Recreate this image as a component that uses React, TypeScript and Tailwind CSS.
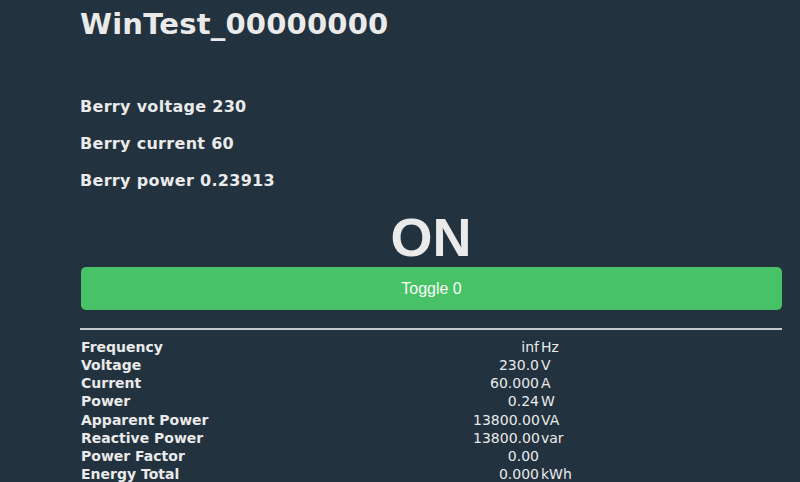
const berry = ["Berry voltage 230", "Berry current 60", "Berry power 0.23913"];

const rows: [string, string, string][] = [
  ["Frequency", "inf", "Hz"],
  ["Voltage", "230.0", "V"],
  ["Current", "60.000", "A"],
  ["Power", "0.24", "W"],
  ["Apparent Power", "13800.00", "VA"],
  ["Reactive Power", "13800.00", "var"],
  ["Power Factor", "0.00", ""],
  ["Energy Total", "0.000", "kWh"],
];

export default function App() {
  return (
    <div className="h-[482px] w-[800px] overflow-hidden bg-[#22323e] text-[#eaeaea] font-['DejaVu_Sans',Verdana,sans-serif]">
      <div className="ml-[80px] w-[702px]">
        <h2 className="pt-[7px] text-[29px] font-bold leading-[34px] tracking-[0.2px]">WinTest_00000000</h2>

        <div className="mt-[47px]">
          {berry.map((b) => (
            <div key={b} className="text-[16px] font-bold leading-[37px] tracking-[0.3px]">
              {b}
            </div>
          ))}
        </div>

        <div className="mt-[9px] h-[59px] text-center font-['Liberation_Sans',Arial,sans-serif] text-[54px] font-bold leading-[59px]">
          ON
        </div>

        <button className="ml-px block h-[43px] w-[701px] rounded-[5px] bg-[#47c266] font-['Liberation_Sans',Arial,sans-serif] text-[16px] text-[#fafafa]">
          Toggle 0
        </button>

        <hr className="mt-[18px] border-0 border-t-2 border-[#c4c8cc]" />

        <div className="mt-[8px] grid grid-cols-[393px_66px_auto] text-[14px] leading-[18.14px]">
          {rows.map(([label, value, unit]) => (
            <div key={label} className="contents">
              <div className="pl-px font-bold">{label}</div>
              <div className="text-right">{value}</div>
              <div className="pl-[2px]">{unit}</div>
            </div>
          ))}
        </div>
      </div>
    </div>
  );
}
